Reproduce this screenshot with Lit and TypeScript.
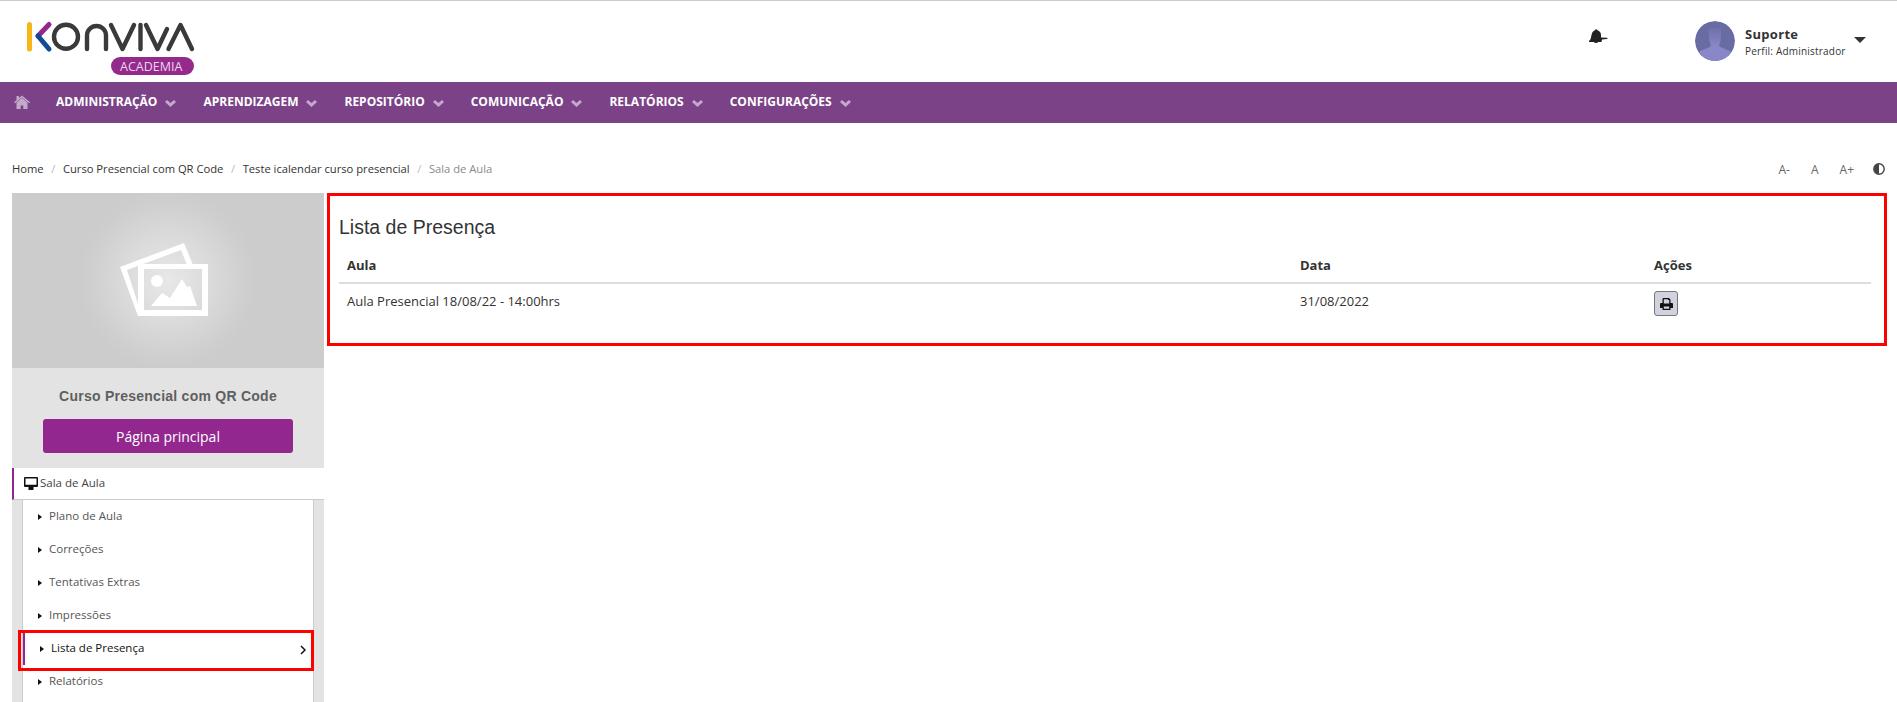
import { LitElement, html, css } from "lit";
import { customElement } from "lit/decorators.js";

const chev = html`<svg class="chev" viewBox="0 0 11 7"><path d="M0 2 2 0 5.500 3 9 0 11 2 5.500 7z" fill="currentColor"/></svg>`;

@customElement("app-root")
export class AppRoot extends LitElement {
  static styles = css`
    :host { display: block; width: 100%; height: 702px; overflow: hidden; background: #fff; font-family: "Open Sans", sans-serif; color: #333; }
    * { box-sizing: border-box; }
    .top { height: 82px; border-top: 1px solid #ccc; display: flex; align-items: flex-start; }
    .logo { display: block; width: 180px; height: 65px; margin: 14px 0 0 20px; }
    .logo text { font: 12.5px "Open Sans", sans-serif; fill: #eed5ec; }
    .spacer { flex: 1; }
    .bell { width: 20px; height: 16px; margin: 28px 87px 0 0; display: block; }
    .avatar { width: 40px; height: 40px; border-radius: 50%; margin-top: 20px; display: block; }
    .user { margin: 24px 0 0 10px; width: 110px; }
    .user b { display: block; font-size: 13px; line-height: 18px; letter-spacing: .3px; }
    .user span { display: block; font-size: 10px; line-height: 14px; letter-spacing: .2px; margin-top: 1px; }
    .caret { width: 0; height: 0; border: 6px solid transparent; border-top: 6px solid #333; border-bottom: 0; margin: 36px 31px 0 -1px; }
    nav { height: 41px; background: #7b4287; display: flex; align-items: center; color: #fff; font-size: 12px; font-weight: 700; padding: 0 0 2px 14px; }
    nav .home { width: 16px; height: 14px; color: #c4aaca; margin-right: 26px; display: block; }
    nav a { display: flex; align-items: center; margin-right: 27px; }
    .chev { width: 11px; height: 7px; color: #c4aaca; margin-left: 8px; margin-top: 3px; display: block; }
    .crumbs { height: 70px; display: flex; align-items: center; padding: 20px 12px 0; font-size: 11.2px; }
    .crumbs i { font-style: normal; color: #bbb; margin: 0 7.6px; }
    .crumbs .cur { color: #8a8a8a; }
    .tools { margin-left: auto; display: flex; align-items: center; color: #666; font-size: 12px; padding-top: 2px; }
    .tools span { display: block; }
    .tools .a1 { margin-right: 21px; }
    .tools .a2 { margin-right: 21px; }
    .tools .a3 { margin-right: 19px; }
    .contrast { width: 12px; height: 12px; display: block; }
    .main { display: flex; align-items: flex-start; padding-left: 12px; }
    .side { width: 312px; flex: none; }
    .thumb { display: block; width: 312px; height: 175px; }
    .course { background: #e3e3e3; height: 100px; display: flex; flex-direction: column; align-items: center; padding-top: 18px; }
    .course h3 { margin: 0; font: 700 14px/20px "Liberation Sans", sans-serif; color: #5f5f5f; letter-spacing: .25px; }
    .course button { margin-top: 13px; width: 250px; height: 34px; border: 0; border-radius: 3px; background: #92278f; color: #fff; font: 14px "Open Sans", sans-serif; }
    .room { height: 32px; border-left: 2px solid #92278f; display: flex; align-items: center; padding: 0 0 2px 10px; font-size: 11.5px; gap: 2px; color: #444; border-bottom: 1px solid #ccc; }
    .room svg { width: 14px; height: 13px; display: block; margin-top: 2px; }
    .menu { background: #e3e3e3; padding: 0 10px; }
    .menu ul { list-style: none; margin: 0; padding: 0; background: #fff; border-left: 1px solid #ccc; border-right: 1px solid #ccc; height: 202px; }
    .menu li { height: 33px; display: flex; align-items: center; padding: 0 0 2px 15px; font-size: 11.5px; color: #555; }
    .menu li::before { content: ""; border: 3.500px solid transparent; border-left: 4px solid #111; border-right: 0; margin-right: 7px; margin-top: 3px; }
    .menu li.active { position: relative; color: #111; padding-left: 17px; }
    .menu li.active::after { content: ""; position: absolute; left: -5px; right: -1px; top: -2px; bottom: -6px; border: 3px solid #f00; }
    .bar { position: absolute; left: 0; top: 0; width: 2px; height: 33px; background: #92278f; }
    .arrow { position: absolute; right: 7px; top: 13px; width: 6px; height: 10px; display: block; }
    .panel { flex: 1; margin: 0 10px 0 3px; height: 153px; border: 3px solid #f00; padding: 18px 9px 0 9px; }
    .panel h2 { margin: 0; font: 400 19.5px/26px "Liberation Sans", sans-serif; color: #333; }
    table { border-collapse: collapse; width: calc(100% - 4px); margin-top: 9px; table-layout: fixed; font-size: 13px; }
    th { text-align: left; font-weight: 700; padding: 0 8px 2px; height: 34px; border-bottom: 2px solid #ddd; }
    td { padding: 8px 8px 0; vertical-align: top; line-height: 18px; }
    td.act { padding-top: 7px; }
    .c1 { width: 953px; }
    .c2 { width: 354px; }
    .print { width: 24px; height: 25px; border: 1px solid #777; border-radius: 3px; background: #d0d3de; display: flex; align-items: center; justify-content: center; }
    .print svg { width: 13px; height: 12px; display: block; }
  `;

  render() {
    const items = ["Plano de Aula", "Correções", "Tentativas Extras", "Impressões"];
    return html`
      <div class="top">
        <svg class="logo" viewBox="20 15 180 65" fill="none" stroke-linecap="round" stroke-linejoin="round">
          <path d="M29.500 24.500V49" stroke="#f7b618" stroke-width="5"/>
          <path d="M49 24.500 38 36" stroke="#92278f" stroke-width="5"/>
          <path d="M38 36 49 49" stroke="#0f4c93" stroke-width="5"/>
          <g stroke="#3a3a3a" stroke-width="4.400">
            <circle cx="66" cy="36.800" r="12"/>
            <path d="M87 49V35.500a9.500 9.500 0 0 1 19 0V49"/>
            <path d="M111 25 122.500 49 134 25"/>
            <path d="M140.500 25V49"/>
            <path d="M146 25 157.500 49 167 29"/>
            <path d="M168.500 49 180.500 25 192 49"/>
          </g>
          <rect x="111" y="57" width="83" height="18" rx="9" fill="#942a8c"/>
          <text x="120" y="70.500">ACADEMIA</text>
        </svg>
        <div class="spacer"></div>
        <svg class="bell" viewBox="0 0 20 16"><path d="M1 12c2-1.500 2-4 2.500-6C4 3 5.500 1.500 7 1.200 7.500 0 9 0 9.500 1.300 11.500 2 13 3.500 13 6l0 2.500 6 .2c.8.100.6 1.300-.2 1.400L14 10.500l-.5 2.500H1z" fill="#222"/><path d="M6 13h4a2 1 0 0 1-4 0z" fill="#222"/></svg>
        <svg class="avatar" viewBox="0 0 40 40"><defs><clipPath id="av"><circle cx="20" cy="20" r="20"/></clipPath><linearGradient id="fig" x1="0" y1="0" x2="0" y2="1"><stop offset="0" stop-color="#6f70a9"/><stop offset=".55" stop-color="#8a87c9"/></linearGradient></defs><g clip-path="url(#av)"><rect width="40" height="40" fill="#696ca3"/><path d="M14 7h12v9c0 4-1.500 7-2 8l1 2 10 4 3 10H2l3-10 10-4 1-2c-.5-1-2-4-2-8z" fill="url(#fig)"/></g></svg>
        <div class="user"><b>Suporte</b><span>Perfil: Administrador</span></div>
        <div class="caret"></div>
      </div>
      <nav>
        <svg class="home" viewBox="0 0 16 14"><path d="M8 .5 16 7.200l-.9 1.100L8 2.500.9 8.300 0 7.200l2.500-2.100V1h2.400v2z" fill="currentColor"/><path d="M2.500 7.500 8 3 13.500 7.500V14H9.300V10.500H6.700V14H2.500z" fill="currentColor"/></svg>
        ${["ADMINISTRAÇÃO", "APRENDIZAGEM", "REPOSITÓRIO", "COMUNICAÇÃO", "RELATÓRIOS", "CONFIGURAÇÕES"].map((t) => html`<a>${t}${chev}</a>`)}
      </nav>
      <div class="crumbs">
        <span>Home</span><i>/</i><span>Curso Presencial com QR Code</span><i>/</i><span>Teste icalendar curso presencial</span><i>/</i><span class="cur">Sala de Aula</span>
        <div class="tools">
          <span class="a1">A-</span><span class="a2">A</span><span class="a3">A+</span>
          <svg class="contrast" viewBox="0 0 12 12"><circle cx="6" cy="6" r="5.200" fill="#fff" stroke="#444" stroke-width="1.400"/><path d="M6 1a5 5 0 0 0 0 10z" fill="#444"/></svg>
        </div>
      </div>
      <div class="main">
        <div class="side">
          <svg class="thumb" viewBox="12 193 312 175">
            <defs><radialGradient id="g" gradientUnits="userSpaceOnUse" cx="168" cy="280" r="90"><stop offset="0" stop-color="#e8e8e8"/><stop offset=".5" stop-color="#dadada"/><stop offset=".85" stop-color="#cfcfcf"/><stop offset="1" stop-color="#cccccc"/></radialGradient></defs>
            <rect x="12" y="193" width="312" height="175" fill="url(#g)"/>
            <path d="M120 267 184 243 193 265H187L181 250 127 270 140 310V316H138z" fill="#fff"/>
            <path fill-rule="evenodd" d="M138 264H208V316H138zM144 269V310H202V269z" fill="#fff"/>
            <circle cx="157" cy="281" r="6" fill="#fff"/>
            <path d="M151 306 162 293 170 298 182 279 187 287 190 286 197 306z" fill="#fff"/>
          </svg>
          <div class="course"><h3>Curso Presencial com QR Code</h3><button>Página principal</button></div>
          <div class="room"><svg viewBox="0 0 14 13"><path fill-rule="evenodd" d="M1 0H13a1 1 0 0 1 1 1V9a1 1 0 0 1-1 1H9.500V13H4.500V10H1A1 1 0 0 1 0 9V1A1 1 0 0 1 1 0zM1.500 1.500V7.800H12.500V1.500z" fill="#111"/></svg>Sala de Aula</div>
          <div class="menu"><ul>
            ${items.map((t) => html`<li>${t}</li>`)}
            <li class="active"><span class="bar"></span>Lista de Presença<svg class="arrow" viewBox="0 0 6 10"><path d="M1 1 5 5 1 9" fill="none" stroke="#111" stroke-width="1.500"/></svg></li>
            <li>Relatórios</li>
          </ul></div>
        </div>
        <section class="panel">
          <h2>Lista de Presença</h2>
          <table>
            <tr><th class="c1">Aula</th><th class="c2">Data</th><th>Ações</th></tr>
            <tr><td>Aula Presencial 18/08/22 - 14:00hrs</td><td>31/08/2022</td><td class="act"><div class="print"><svg viewBox="0 0 13 12"><path fill-rule="evenodd" d="M3 0H9L10.500 1.500V5H12a1 1 0 0 1 1 1V10H10.500V12H2.500V10H0V6a1 1 0 0 1 1-1H2.500V1zM3.800 1.200V5.500H9.200V2H8V1.200zM3.800 8.500V10.800H9.200V8.500z" fill="#111"/></svg></div></td></tr>
          </table>
        </section>
      </div>
    `;
  }
}
